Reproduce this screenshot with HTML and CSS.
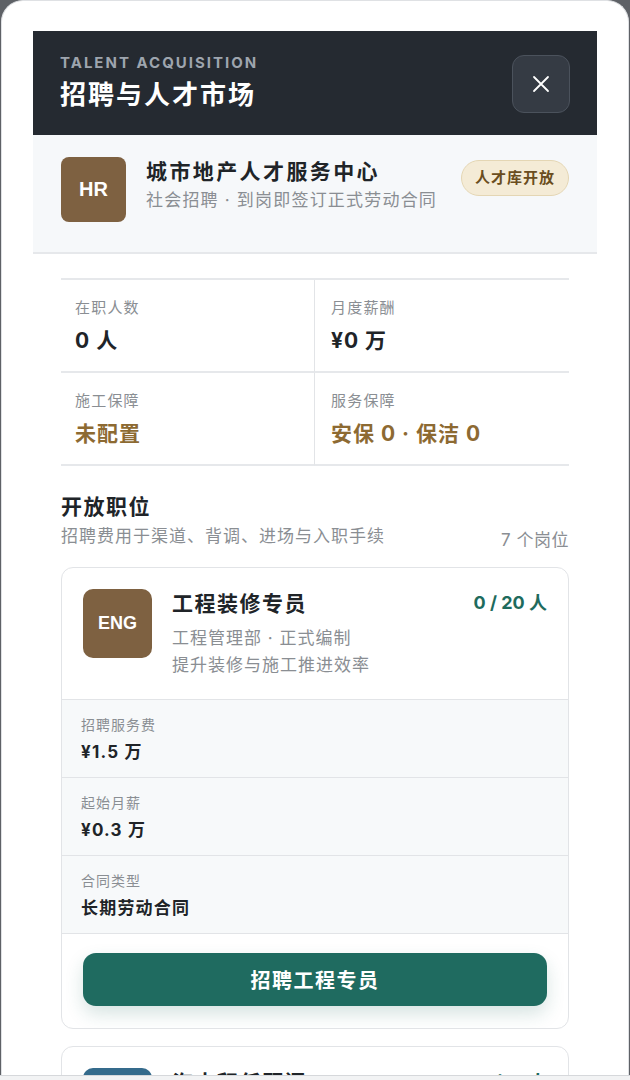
FILE: index.html
```html
<!DOCTYPE html>
<html lang="zh-CN">
<head>
<meta charset="utf-8">
<title>招聘与人才市场</title>
<link rel="stylesheet" href="styles.css">
</head>
<body>
<div class="sheet">
  <div class="inner">
    <header class="hero">
      <div class="hero-text">
        <div class="eyebrow">TALENT ACQUISITION</div>
        <h1 class="hero-title">招聘与人才市场</h1>
      </div>
      <button class="close-btn" aria-label="关闭">
        <svg width="22" height="22" viewBox="0 0 22 22"><path d="M4 4 L18 18 M18 4 L4 18" stroke="#ffffff" stroke-width="1.8" stroke-linecap="round" fill="none"/></svg>
      </button>
    </header>

    <section class="company">
      <div class="avatar avatar-hr">HR</div>
      <div class="company-info">
        <div class="company-name">城市地产人才服务中心</div>
        <div class="company-sub">社会招聘 · 到岗即签订正式劳动合同</div>
      </div>
      <span class="badge">人才库开放</span>
    </section>

    <div class="body">
      <div class="stats">
        <div class="stat">
          <div class="stat-label">在职人数</div>
          <div class="stat-value">0 人</div>
        </div>
        <div class="stat">
          <div class="stat-label">月度薪酬</div>
          <div class="stat-value">¥0 万</div>
        </div>
        <div class="stat">
          <div class="stat-label">施工保障</div>
          <div class="stat-value gold">未配置</div>
        </div>
        <div class="stat">
          <div class="stat-label">服务保障</div>
          <div class="stat-value gold">安保 0 · 保洁 0</div>
        </div>
      </div>

      <div class="section-head">
        <h2 class="section-title">开放职位</h2>
        <div class="section-sub">
          <span>招聘费用于渠道、背调、进场与入职手续</span>
          <span class="count">7 个岗位</span>
        </div>
      </div>

      <div class="job">
        <div class="job-top">
          <div class="avatar avatar-eng">ENG</div>
          <div class="job-info">
            <div class="job-title-row">
              <div class="job-title">工程装修专员</div>
              <div class="job-quota">0 / 20 人</div>
            </div>
            <div class="job-meta">工程管理部 · 正式编制</div>
            <div class="job-meta">提升装修与施工推进效率</div>
          </div>
        </div>
        <div class="job-row">
          <div class="row-label">招聘服务费</div>
          <div class="row-value">¥1.5 万</div>
        </div>
        <div class="job-row">
          <div class="row-label">起始月薪</div>
          <div class="row-value">¥0.3 万</div>
        </div>
        <div class="job-row">
          <div class="row-label">合同类型</div>
          <div class="row-value">长期劳动合同</div>
        </div>
        <div class="job-action">
          <button class="hire-btn">招聘工程专员</button>
        </div>
      </div>

      <div class="job">
        <div class="job-top">
          <div class="avatar avatar-blue">OPS</div>
          <div class="job-info">
            <div class="job-title-row">
              <div class="job-title">海内积任顾问</div>
              <div class="job-quota">0 / 12 人</div>
            </div>
          </div>
        </div>
      </div>
    </div>
  </div>
</div>
<div class="bottom-bar"></div>
</body>
</html>
```

FILE: styles.css
```css
* { box-sizing: border-box; }
html, body {
  margin: 0;
  padding: 0;
}
body {
  width: 630px;
  height: 1080px;
  overflow: hidden;
  background: #5e6166;
  font-family: Inter, "Noto Sans CJK SC", sans-serif;
  color: #22262b;
}
.sheet {
  height: 1075px;
  margin: 0 1px;
  background: #ffffff;
  border-radius: 22px 22px 0 0;
  border: 1px solid #dfe1e4;
  border-bottom: none;
  overflow: hidden;
}
.inner {
  padding: 30px 31px 0;
}
.hero {
  background: #252a31;
  height: 104px;
  padding: 0 27px;
  display: flex;
  align-items: center;
  justify-content: space-between;
}
.eyebrow {
  font-size: 15px;
  font-weight: 700;
  letter-spacing: 2px;
  color: #9ea5ae;
  line-height: 18px;
}
.hero-title {
  margin: 6px 0 0;
  font-size: 26px;
  font-weight: 700;
  color: #ffffff;
  line-height: 34px;
  letter-spacing: 2px;
}
.close-btn {
  width: 58px;
  height: 58px;
  border-radius: 12px;
  background: #353b44;
  border: 1px solid #4b525c;
  display: flex;
  align-items: center;
  justify-content: center;
  padding: 0;
  margin-top: 2px;
}
.company {
  background: #f6f8fa;
  border-bottom: 2px solid #e6e8eb;
  padding: 22px 28px 30px;
  display: flex;
  align-items: flex-start;
}
.avatar {
  flex: none;
  display: flex;
  align-items: center;
  justify-content: center;
  color: #ffffff;
  font-weight: 700;
  font-family: "Liberation Sans", Inter, sans-serif;
}
.avatar-hr {
  width: 65px;
  height: 65px;
  border-radius: 8px;
  background: #7e6141;
  font-size: 20px;
}
.company-info {
  flex: 1;
  margin-left: 20px;
  padding-top: 1px;
}
.company-name {
  font-size: 21px;
  font-weight: 700;
  line-height: 28px;
  color: #202428;
  letter-spacing: 2.4px;
}
.company-sub {
  font-size: 17px;
  color: #8a8e93;
  line-height: 24px;
  margin-top: 2px;
  letter-spacing: 1.2px;
}
.badge {
  flex: none;
  margin-top: 3px;
  padding: 0 13px;
  height: 36px;
  line-height: 34px;
  border-radius: 18px;
  background: #f4ebd6;
  border: 1px solid #e4d6b4;
  color: #6a4d20;
  font-size: 15px;
  font-weight: 700;
  letter-spacing: 1px;
}
.body {
  padding: 24px 28px 0;
}
.stats {
  display: grid;
  grid-template-columns: 1fr 1fr;
  border-top: 2px solid #e6e8eb;
}
.stat {
  height: 93px;
  padding: 17px 14px 0;
  border-bottom: 2px solid #e6e8eb;
}
.stat:nth-child(odd) {
  border-right: 1px solid #e2e4e7;
}
.stat:nth-child(even) {
  padding-left: 16px;
}
.stat-label {
  font-size: 15px;
  color: #8a8e93;
  line-height: 22px;
  letter-spacing: 1.2px;
}
.stat-value {
  margin-top: 8px;
  font-size: 21px;
  font-weight: 700;
  line-height: 28px;
  color: #202428;
  letter-spacing: 1px;
}
.stat-value.gold {
  color: #8d6a32;
}
.section-head {
  margin-top: 25px;
}
.section-title {
  margin: 0;
  font-size: 21px;
  font-weight: 700;
  line-height: 32px;
  color: #202428;
  letter-spacing: 1.5px;
}
.section-sub {
  display: flex;
  justify-content: space-between;
  align-items: flex-end;
  font-size: 17px;
  color: #8a8e93;
  line-height: 26px;
  letter-spacing: 1px;
}
.section-sub .count {
  position: relative;
  top: 4px;
  letter-spacing: 0.5px;
}
.job {
  margin-top: 18px;
  border: 1px solid #e2e4e7;
  border-radius: 12px;
  overflow: hidden;
  background: #ffffff;
}
.job + .job {
  margin-top: 17px;
}
.job-top {
  display: flex;
  padding: 21px 21px 20px;
}
.avatar-eng {
  width: 69px;
  height: 69px;
  border-radius: 10px;
  background: #7e6141;
  font-size: 18px;
}
.avatar-blue {
  width: 69px;
  height: 69px;
  border-radius: 10px;
  background: #356b8c;
  font-size: 18px;
}
.job-info {
  flex: 1;
  margin-left: 20px;
}
.job-title-row {
  display: flex;
  justify-content: space-between;
  align-items: flex-start;
}
.job-title {
  font-size: 21px;
  font-weight: 700;
  line-height: 30px;
  color: #202428;
  letter-spacing: 1.5px;
}
.job-quota {
  font-size: 18px;
  font-weight: 700;
  line-height: 28px;
  color: #1e6b5d;
}
.job-meta {
  font-size: 17px;
  color: #8a8e93;
  line-height: 27px;
  letter-spacing: 1px;
}
.job-title-row + .job-meta {
  margin-top: 6px;
}
.job-row {
  background: #f7f9fa;
  border-top: 1px solid #e2e4e7;
  height: 78px;
  padding: 14px 19px 0;
}
.row-label {
  font-size: 14px;
  color: #8a8e93;
  line-height: 22px;
  letter-spacing: 1px;
}
.row-value {
  margin-top: 3px;
  font-size: 17px;
  font-weight: 700;
  line-height: 26px;
  color: #202428;
  letter-spacing: 1.2px;
}
.job-action {
  border-top: 1px solid #e2e4e7;
  padding: 19px 21px 22px;
}
.hire-btn {
  display: block;
  width: 100%;
  height: 53px;
  border: none;
  border-radius: 13px;
  background: #1f6b60;
  color: #ffffff;
  font-family: Inter, "Noto Sans CJK SC", sans-serif;
  font-size: 20px;
  font-weight: 700;
  letter-spacing: 1.5px;
  box-shadow: 0 8px 18px rgba(31, 107, 96, 0.18);
}
.bottom-bar {
  height: 5px;
  background: #f2f3f4;
  border-top: 1px solid #d6d8db;
}
```
